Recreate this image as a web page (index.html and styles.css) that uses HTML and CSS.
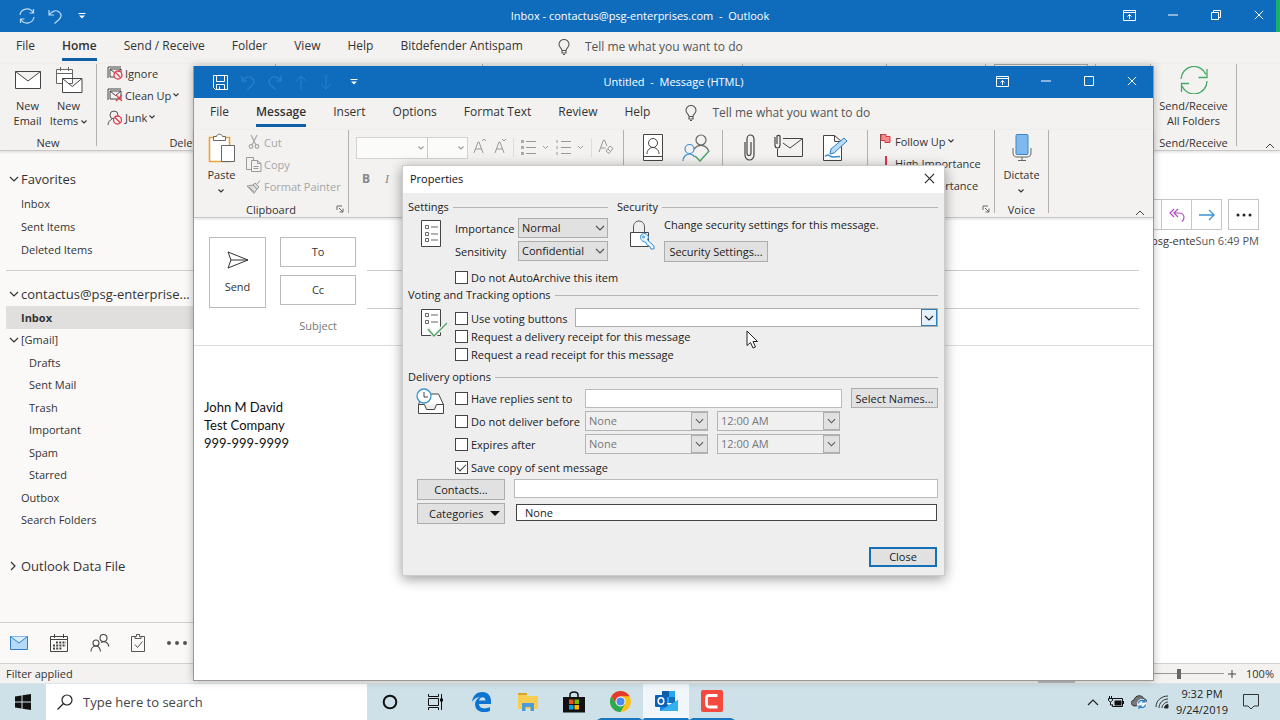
FILE: index.html
```html
<!DOCTYPE html>
<html lang="en">
<head>
<meta charset="utf-8">
<title>Inbox - contactus@psg-enterprises.com - Outlook</title>
<link rel="stylesheet" href="styles.css">
</head>
<body>
<svg class="defs" aria-hidden="true">
  <symbol id="chev" viewBox="0 0 10 6"><path d="M1 1l4 4 4-4" fill="none" stroke="currentColor" stroke-width="1.2"/></symbol>
  <symbol id="mini" viewBox="0 0 6 4"><path d="M.5 .5L3 3 5.5 .5" fill="none" stroke="currentColor" stroke-width="1.1"/></symbol>
  <symbol id="bulb" viewBox="0 0 12 16"><path d="M4 11.5C4 9 1 8.500 1 5.500a5 5 0 0 1 10 0C11 8.500 8 9 8 11.500zM4 11.500v2.500h4v-2.500M5 15.500h2" fill="none" stroke="#555" stroke-width="1.100"/></symbol>
  <symbol id="close" viewBox="0 0 12 12"><path d="M1 1l10 10M11 1L1 11" stroke="currentColor" stroke-width="1.200"/></symbol>
  <symbol id="ribbonopt" viewBox="0 0 13 11"><path d="M.5.5h12v10H.5zM.5 2.500h12M6.500 9V4.500M4.500 6.500l2-2 2 2" fill="none" stroke="currentColor"/></symbol>
  <symbol id="qat" viewBox="0 0 8 6"><path d="M.5.5h7" stroke="currentColor"/><path d="M1 2.500l3 3 3-3z" fill="currentColor"/></symbol>
  <symbol id="undo" viewBox="0 0 14 15"><path d="M1 1v5h5M1 6C4 2 8 .500 11 3s2.500 5 0 7.500L6.500 14.500" fill="none" stroke="currentColor" stroke-width="1.200"/></symbol>
  <symbol id="launch" viewBox="0 0 8 8"><path d="M1 5V1h5M3 3l4 4M7 3.500V7H3.500" fill="none" stroke="#666"/></symbol>
  <symbol id="envx" viewBox="0 0 16 13"><path d="M1 12V1h13M3 3h11v8H3zM3 3l5.500 4.500L14 3" fill="none" stroke="#444"/></symbol>
</svg>

<div class="desktop">
  <main class="outlook">
    <header class="titlebar main-title">
      <div class="quick">
        <svg width="16" height="16" viewBox="0 0 16 16" fill="none" stroke="#b9dcf7" stroke-width="1.200"><path d="M1 7a7 7 0 0 1 13-2.500M14.500 1v4h-4M15 9a7 7 0 0 1-13 2.500M1.500 15v-4h4"/></svg>
        <svg class="soft" width="14" height="15"><use href="#undo"/></svg>
        <svg width="8" height="6"><use href="#qat"/></svg>
      </div>
      <h1>Inbox - contactus@psg-enterprises.com&nbsp; -&nbsp; Outlook</h1>
      <div class="controls">
        <button aria-label="Ribbon display options"><svg width="13" height="11"><use href="#ribbonopt"/></svg></button>
        <button aria-label="Minimize"><svg width="10" height="2"><path d="M0 1h10" stroke="currentColor"/></svg></button>
        <button aria-label="Restore"><svg width="10" height="10" fill="none" stroke="currentColor"><path d="M.5 2.500h7v7h-7zM2.500 2.500v-2h7v7h-2"/></svg></button>
        <button aria-label="Close"><svg width="10" height="10"><use href="#close"/></svg></button>
      </div>
      <span class="edge"></span>
    </header>

    <nav class="tabs">
      <a href="#">File</a><a href="#" class="active">Home</a><a href="#">Send / Receive</a><a href="#">Folder</a><a href="#">View</a><a href="#">Help</a><a href="#">Bitdefender Antispam</a>
      <span class="tell"><svg width="12" height="16"><use href="#bulb"/></svg>Tell me what you want to do</span>
    </nav>

    <section class="ribbon main-ribbon">
      <div class="group g-new">
        <div class="tools">
          <button class="big"><svg width="28" height="28" viewBox="0 0 28 28"><path d="M1.500 5.500h25v17h-25zM1.500 5.500L14 15 26.500 5.500" fill="#fff" stroke="#444"/></svg><span>New<br>Email</span></button>
          <button class="big"><svg width="28" height="28" viewBox="0 0 28 28"><path d="M1.500 3.500h16v14h-16zM1.500 7.500h16M5.500 1v4M13.500 1v4" fill="#fff" stroke="#666"/><path d="M7.500 12.500h19.500v14H7.500zl9.800 8 9.700-8" fill="#fff" stroke="#444"/></svg><span>New<br>Items <svg width="6" height="4"><use href="#mini"/></svg></span></button>
        </div>
        <div class="label">New</div>
      </div>
      <div class="group g-delete">
        <div class="tools">
          <div class="small-stack">
            <button class="small"><svg width="16" height="14"><use href="#envx" width="16" height="13"/><circle cx="11" cy="9" r="4" fill="#f3f2f1" stroke="#e04050" stroke-width="1.300"/><path d="M8.300 6.300l5.400 5.400" stroke="#e04050" stroke-width="1.300"/></svg>Ignore</button>
            <button class="small"><svg width="16" height="14"><use href="#envx" width="16" height="13"/><path d="M9 7l6 6M15 7l-6 6" stroke="#e04050" stroke-width="1.300"/></svg>Clean Up <svg width="6" height="4"><use href="#mini"/></svg></button>
            <button class="small"><svg width="16" height="15" fill="none"><circle cx="7" cy="5" r="4" stroke="#555"/><path d="M1 15c0-3 2-5 4-6" stroke="#555"/><circle cx="10.500" cy="10" r="4" fill="#f3f2f1" stroke="#e04050" stroke-width="1.300"/><path d="M7.800 7.300l5.400 5.400" stroke="#e04050" stroke-width="1.300"/></svg>Junk <svg width="6" height="4"><use href="#mini"/></svg></button>
          </div>
        </div>
        <div class="label">Delete</div>
      </div>
      <div class="group g-a"></div><div class="group g-b"></div><div class="group g-c"></div><div class="group g-d"></div>
      <div class="group g-find"><div class="find-box"></div></div>
      <div class="group g-e"></div>
      <div class="group g-send">
        <div class="tools">
          <button class="big"><svg width="28" height="28" viewBox="0 0 28 28" fill="none" stroke="#45a864" stroke-width="1.300"><path d="M1 13A13 13 0 0 1 26 8.500M27 3v8.500h-8.500M27 15A13 13 0 0 1 2 20M1.500 26v-8.500H9"/></svg><span>Send/Receive<br>All Folders</span></button>
        </div>
        <div class="label">Send/Receive</div>
      </div>
      <div class="collapse"><svg width="10" height="6"><path d="M1 5l4-4 4 4" fill="none" stroke="#444"/></svg></div>
    </section>

    <div class="workspace">
      <aside class="sidebar">
        <h2><svg width="10" height="6"><use href="#chev"/></svg>Favorites</h2>
        <ul class="fav"><li>Inbox</li><li>Sent Items</li><li>Deleted Items</li></ul>
        <h2 class="account"><svg width="10" height="6"><use href="#chev"/></svg>contactus@psg-enterprise...</h2>
        <ul class="folders">
          <li class="selected">Inbox</li>
          <li class="parent"><svg width="10" height="6"><use href="#chev"/></svg>[Gmail]</li>
          <li class="child">Drafts</li><li class="child">Sent Mail</li><li class="child">Trash</li><li class="child">Important</li><li class="child">Spam</li><li class="child">Starred</li>
          <li>Outbox</li><li>Search Folders</li>
        </ul>
        <h2 class="datafile"><svg width="10" height="10"><path d="M2 1l4 4-4 4" fill="none" stroke="currentColor" stroke-width="1.200"/></svg>Outlook Data File</h2>
        <nav class="modules">
          <button aria-label="Mail"><svg width="18" height="14"><path d="M.5.5h17v13H.5z" fill="#b5daf8" stroke="#2f7fc4"/><path d="M.5.5L9 7 17.500.5" fill="#d9edfc" stroke="#2f7fc4"/></svg></button>
          <button aria-label="Calendar"><svg width="18" height="18" fill="none" stroke="#444"><path d="M.5 2.500h17v15H.5zM.5 5.500h17M4.500 0v4M13.500 0v4"/><path d="M6 8.500h10M3 11.500h13M3 14.500h9" stroke-width="1.800" stroke-dasharray="2 1.200"/></svg></button>
          <button aria-label="People"><svg width="20" height="18" fill="none" stroke="#444" stroke-width="1.100"><circle cx="13.500" cy="4" r="3.500"/><circle cx="6" cy="9" r="3"/><path d="M1 17.500c0-3 2-5.500 5-5.500s4 2 4.500 5.500M11 8.500c4-2 7 0 8 4"/></svg></button>
          <button aria-label="Tasks"><svg width="14" height="18" fill="none" stroke="#555"><path d="M4 2.500H.5v15h13v-15H10M4 4.500v-2h1.500v-2h3v2H10v2zM4 10.500l2.500 3 5-6"/></svg></button>
          <button aria-label="More"><svg width="20" height="4" fill="#555"><circle cx="2" cy="2" r="2"/><circle cx="10" cy="2" r="2"/><circle cx="18" cy="2" r="2"/></svg></button>
        </nav>
      </aside>
      <section class="reading">
        <div class="actions">
          <button aria-label="Reply"></button><button aria-label="Reply all"><svg width="16" height="14" fill="none" stroke="#b24fc0" stroke-width="1.200"><path d="M5 1L1 5l4 4M9 1L5 5l4 4M5 5h5c3 0 5 2 5 4.500 0 2-1 3-2 4"/></svg></button><button aria-label="Forward"><svg width="16" height="12" fill="none" stroke="#3a94d4" stroke-width="1.300"><path d="M0 6h15M10 1l5 5-5 5"/></svg></button>
          <button class="more" aria-label="More actions"><svg width="16" height="4" fill="#222"><circle cx="2" cy="2" r="1.500"/><circle cx="8" cy="2" r="1.500"/><circle cx="14" cy="2" r="1.500"/></svg></button>
        </div>
        <div class="meta"><span>psg-ente</span><time>Sun 6:49 PM</time></div>
      </section>
    </div>

    <footer class="status">
      <span>Filter applied</span>
      <label class="zoom"><input type="range" min="0" max="100" value="73" aria-label="Zoom"><svg width="8" height="8"><path d="M0 4h8M4 0v8" stroke="#444"/></svg><span>100%</span></label>
    </footer>
  </main>

  <section class="message">
    <header class="titlebar">
      <div class="quick">
        <svg width="15" height="15" fill="none" stroke="#fff"><path d="M.5.5h14v14H2.500l-2-2zM3.500.5v6h8v-6M3.500 14.500v-5h8v5M6.500 14.500v-3"/></svg>
        <svg class="dim" width="14" height="15"><use href="#undo"/></svg>
        <svg class="dim" width="14" height="15"><use href="#undo" transform="matrix(-1 0 0 1 14 0)"/></svg>
        <svg class="dim" width="12" height="15" fill="none" stroke="currentColor"><path d="M6 15V1M1 6l5-5 5 5"/></svg>
        <svg class="dim" width="12" height="15" fill="none" stroke="currentColor"><path d="M6 0v14M1 9l5 5 5-5"/></svg>
        <svg width="8" height="6"><use href="#qat"/></svg>
      </div>
      <h1>Untitled&nbsp; -&nbsp; Message (HTML)</h1>
      <div class="controls">
        <button aria-label="Ribbon display options"><svg width="13" height="11"><use href="#ribbonopt"/></svg></button>
        <button aria-label="Minimize"><svg width="10" height="2"><path d="M0 1h10" stroke="currentColor"/></svg></button>
        <button aria-label="Maximize"><svg width="10" height="10"><path d="M.5.5h9v9h-9z" fill="none" stroke="currentColor"/></svg></button>
        <button aria-label="Close"><svg width="10" height="10"><use href="#close"/></svg></button>
      </div>
    </header>
    <nav class="tabs">
      <a href="#">File</a><a href="#" class="active">Message</a><a href="#">Insert</a><a href="#">Options</a><a href="#">Format Text</a><a href="#">Review</a><a href="#">Help</a>
      <span class="tell"><svg width="12" height="16"><use href="#bulb"/></svg>Tell me what you want to do</span>
    </nav>
    <section class="ribbon">
      <div class="group m-clip">
        <div class="tools">
          <button class="big"><svg width="28" height="30" viewBox="0 0 28 30"><path d="M1.500 4.500h20v24h-20z" fill="#fff" stroke="#e8a33d" stroke-width="1.600"/><path d="M5.500 7.500v-4h3c0-3 6-3 6 0h3v4z" fill="#fff" stroke="#666"/><path d="M13.500 12.500h13v16h-13z" fill="#fff" stroke="#666"/></svg><span>Paste<br><svg width="6" height="4"><use href="#mini"/></svg></span></button>
          <div class="small-stack off">
            <button class="small"><svg width="16" height="14" fill="none" stroke="#a6a6a6" stroke-width="1.200"><path d="M5 0l5 10M11 0L6 10"/><circle cx="5" cy="11.500" r="1.800"/><circle cx="11" cy="11.500" r="1.800"/></svg>Cut</button>
            <button class="small"><svg width="16" height="15" fill="none" stroke="#999"><path d="M5.500 12.500h-5V.5h7v3M5.500 3.500h6l3.500 3v8H5.500zM11.500 3.500v3H15M7.500 9.500h5M7.500 11.500h5"/></svg>Copy</button>
            <button class="small"><svg width="16" height="15" fill="#ddd" stroke="#999"><path d="M1 7l6-1 4 4-3 4.500zM7 6l2-2 4 4-2 2M11 5l3-3.500M3 8l5 5"/></svg>Format Painter</button>
          </div>
        </div>
        <div class="label">Clipboard</div>
        <svg class="launcher" width="8" height="8"><use href="#launch"/></svg>
      </div>
      <div class="group m-text">
        <div class="font-row">
          <span class="font-pick font-name"><select aria-label="Font" disabled><option></option></select><svg width="6" height="4"><use href="#mini"/></svg></span><span class="font-pick font-size"><select aria-label="Font size" disabled><option></option></select><svg width="6" height="4"><use href="#mini"/></svg></span>
          <svg width="150" height="24" fill="none" stroke="#999"><path d="M6 16l4-11h1l4 11M7.500 12h6M14 4l2-2 2 2M27 16l4-11h1l4 11M28.500 12h6M34 2l2 2 2-2"/><path d="M45.500 1v19M123.500 1v19" stroke="#ddd"/><path d="M58 4.500h10M58 10.500h10M58 16.500h10M93 4.500h10M93 10.500h10M93 16.500h10"/><path d="M53 4.500h3M53 10.500h3M53 16.500h3" stroke-width="3" stroke="#aaa"/><path d="M89 3v3M89 9v3M89 15v3"/><path d="M75 9l2.500 2.500L80 9M110 9l2.500 2.500L115 9"/><path d="M131 15l4.500-12h1L139 9M133 11h4.500M138 14l4-5 3 2.500-4 5zM140 12l3 3"/></svg>
        </div>
        <div class="bi"><b>B</b><i>I</i></div>
      </div>
      <div class="group m-names"><div class="tools">
        <svg width="20" height="28" fill="#fff" stroke="#444"><path d="M.5.5h19v26H.5zM.5 22.500h19"/><circle cx="10" cy="9" r="4.500" fill="none"/><path d="M4 20c0-4 3-6.500 6-6.500s6 2.500 6 6.500" fill="none"/></svg>
        <svg width="28" height="28" fill="none" stroke="#666" stroke-width="1.200"><circle cx="19" cy="6" r="5"/><path d="M12 15c5-6 13-4 15 3"/><g stroke="#3c8fd4"><circle cx="7.500" cy="15" r="4.500"/><path d="M1 27c0-4 3-7 6.500-7 3 0 4 1 5 3"/></g><path d="M13 22l5 5 9-10" stroke="#4ea868" stroke-width="1.500"/></svg>
      </div></div>
      <div class="group m-include"><div class="tools">
        <svg width="12" height="28" fill="none" stroke="#444" stroke-width="1.200"><path d="M1 8V21a4.500 5 0 0 0 9 0V5a3.500 4 0 0 0-7 0v14a2 2.500 0 0 0 4 0V8"/></svg>
        <svg width="30" height="28" fill="none" stroke="#444"><path d="M3.500 15v7.500h25v-18H9M28 5L16 14 9 9"/><path d="M1 3v8a2.500 3 0 0 0 5 0V2a2 2 0 0 0-3 0v8" stroke-width="1.200"/></svg>
        <svg width="26" height="28" fill="#fff" stroke="#444"><path d="M1.500 1.500h11l7 6v19h-18zM12.500 1.500v6h7"/><path d="M3 22.500c3-3 4-1 6 0s5 0 9 0" fill="none" stroke="#3c8fd4" stroke-width="1.500"/><path d="M8 20l1-5L22 4l3 3-13 12z" fill="#b9dcf8" stroke="#2f7fc4"/></svg>
      </div></div>
      <div class="group m-tags"><div class="small-stack">
        <button class="small"><svg width="14" height="16"><path d="M1.500 1v15" stroke="#555"/><path d="M2 1.500h5v2h4v6H6v-2H2z" fill="#f38b8b" stroke="#d63a46"/></svg>Follow Up <svg width="6" height="4"><use href="#mini"/></svg></button>
        <button class="small"><svg width="14" height="14"><path d="M7 0v9" stroke="#dc3545" stroke-width="2"/><circle cx="7" cy="12.500" r="1.300" fill="#dc3545"/></svg>High Importance</button>
        <button class="small"><svg width="14" height="14"><path d="M7 0v12M3 8l4 4 4-4" fill="none" stroke="#3c8fd4" stroke-width="1.500"/></svg>Low Importance</button>
      </div>
      <svg class="launcher" width="8" height="8"><use href="#launch"/></svg></div>
      <div class="group m-voice"><div class="tools">
        <button class="big"><svg width="20" height="30"><rect x="4" y="1.500" width="12" height="20" rx="1" fill="#7db9ed" stroke="#3c84c4"/><path d="M1 15v5c0 3 2 4 4 4h10c2 0 4-1 4-4v-5M10 24v3M6 27.500h8" fill="none" stroke="#666"/></svg><span>Dictate<br><svg width="6" height="4"><use href="#mini"/></svg></span></button></div>
        <div class="label">Voice</div>
      </div>
      <div class="collapse"><svg width="10" height="6"><path d="M1 5l4-4 4 4" fill="none" stroke="#444"/></svg></div>
    </section>
    <form class="compose">
      <div class="head">
        <button type="button" class="send"><svg width="22" height="18" fill="none" stroke="#333"><path d="M1 1l20 8L1 17l3-8zM4 9h17"/></svg>Send</button>
        <div class="fields">
          <button type="button" class="addr">To</button><input aria-label="To">
          <button type="button" class="addr">Cc</button><input aria-label="Cc">
          <label for="subject">Subject</label><input id="subject" class="subject">
        </div>
      </div>
      <div class="letter">John M David<br>Test Company<br>999-999-9999</div>
    </form>
  </section>

  <section class="dialog" role="dialog" aria-labelledby="dlg-title">
    <header><h2 id="dlg-title">Properties</h2><button class="x" aria-label="Close dialog"><svg width="11" height="11"><use href="#close"/></svg></button></header>
    <form>
      <div class="two">
        <section class="settings">
          <h3>Settings</h3>
          <div class="with-icon">
            <svg width="22" height="28" fill="#fff" stroke="#444"><path d="M1.500.5h19v26h-19z"/><path d="M5.500 5.500h3v3h-3zM5.500 12.500h3v3h-3zM5.500 18.500h3v3h-3zM11 7h7M11 14h7M11 20h7" stroke="#666"/></svg>
            <div class="settings-grid">
              <label for="imp">Importance</label><span class="pick"><select id="imp"><option>Normal</option></select><svg width="10" height="6"><use href="#chev"/></svg></span>
              <label for="sens">Sensitivity</label><span class="pick"><select id="sens"><option>Confidential</option></select><svg width="10" height="6"><use href="#chev"/></svg></span>
              <label class="check archive"><input type="checkbox">Do not AutoArchive this item</label>
            </div>
          </div>
        </section>
        <section class="security">
          <h3>Security</h3>
          <div class="with-icon">
            <svg width="26" height="30" fill="none" stroke="#555"><path d="M1.500 12.500h18v14h-18z" fill="#fff" stroke="#444"/><path d="M4.500 12V7c0-8 11-8 11 0v5"/><path d="M12 15a4 4 0 1 1 6.500 5l6.500 6v3h-3l-1.500-3-2-.500-2-3.500c-4 0-6-4-4.500-7z" fill="#e8f4fd" stroke="#2f8fd4"/><circle cx="14.500" cy="17" r="1" stroke="#2f8fd4"/></svg>
            <div class="sec-body"><span>Change security settings for this message.</span><button type="button" class="btn">Security Settings...</button></div>
          </div>
        </section>
      </div>
      <section class="voting">
        <h3>Voting and Tracking options</h3>
        <div class="with-icon">
          <svg width="28" height="30" fill="none" stroke="#444"><path d="M1.500.5h19v26h-19z" fill="#fff"/><path d="M5.500 4.500h3v3h-3zM5.500 11.500h3v3h-3zM11 6h7M11 13h7" stroke="#666"/><path d="M8 20l6 7L27 14" stroke="#eee" stroke-width="4"/><path d="M8 20l6 7L27 14" stroke="#52a667" stroke-width="1.300"/></svg>
          <div class="lines">
            <div class="line"><label class="check"><input type="checkbox">Use voting buttons</label><span class="combo"><input aria-label="Voting buttons"><button type="button" aria-label="Show choices"><svg width="10" height="6"><use href="#chev"/></svg></button></span></div>
            <label class="check"><input type="checkbox">Request a delivery receipt for this message</label>
            <label class="check"><input type="checkbox">Request a read receipt for this message</label>
          </div>
        </div>
      </section>
      <section class="delivery">
        <h3>Delivery options</h3>
        <div class="with-icon">
          <svg width="28" height="28" fill="#fff" stroke="#444"><path d="M1.500 16.500L6 6h15.500l5 10.500v9h-25zM1.500 16.500h6l2 5h8l2-5h7"/><circle cx="7" cy="8" r="7" stroke="#3c94cf" stroke-width="1.300"/><path d="M7 4v5h4" fill="none"/></svg>
          <div class="delivery-grid">
            <label class="check"><input type="checkbox">Have replies sent to</label><input class="field reply" aria-label="Reply address"><button type="button" class="btn">Select Names...</button>
            <label class="check"><input type="checkbox">Do not deliver before</label><span class="pick date"><select disabled aria-label="Deliver date"><option>None</option></select><svg width="10" height="6"><use href="#chev"/></svg></span><span class="pick date"><select disabled aria-label="Deliver time"><option>12:00 AM</option></select><svg width="10" height="6"><use href="#chev"/></svg></span>
            <label class="check"><input type="checkbox">Expires after</label><span class="pick date"><select disabled aria-label="Expiry date"><option>None</option></select><svg width="10" height="6"><use href="#chev"/></svg></span><span class="pick date"><select disabled aria-label="Expiry time"><option>12:00 AM</option></select><svg width="10" height="6"><use href="#chev"/></svg></span>
            <label class="check save"><input type="checkbox" checked>Save copy of sent message</label>
          </div>
        </div>
        <div class="bottom">
          <button type="button" class="btn">Contacts...</button><input class="field" aria-label="Contacts">
          <button type="button" class="btn cat"><span>Cate<u>g</u>ories</span><svg width="10" height="5"><path d="M0 0h10L5 5z" fill="#111"/></svg></button><input class="field dark" aria-label="Categories" value="None">
        </div>
      </section>
      <footer><button type="button" class="btn primary">Close</button></footer>
    </form>
  </section>

  <span class="scroll-hint"></span>
  <svg class="cursor" width="12" height="19"><path d="M1 1v14.500l3.500-3 2.500 5.500 2.500-1-2.500-5.500h4.500z" fill="#fff" stroke="#222"/></svg>
</div>

<footer class="taskbar">
  <button class="cell" aria-label="Start"><svg width="16" height="16" fill="#111"><path d="M0 2.500L6.500 1.500v6H0zM7.500 1.300L16 0v7.500H7.500zM0 8.500h6.500v6L0 13.500zM7.500 8.500H16V16l-8.500-1.300z"/></svg></button>
  <label class="search"><svg width="16" height="16" fill="none" stroke="#222" stroke-width="1.200"><circle cx="10" cy="6" r="5"/><path d="M6.500 9.500L.5 15.500"/></svg><input placeholder="Type here to search"></label>
  <button class="cell" aria-label="Cortana"><svg width="16" height="16"><circle cx="8" cy="8" r="6.300" fill="none" stroke="#111" stroke-width="2"/></svg></button>
  <button class="cell" aria-label="Task view"><svg width="16" height="16" fill="none" stroke="#111"><path d="M.5 4.500h10v7H.5zM.5 0v2.500h10V0M.5 16v-2.500h10V16M13.500 0v16"/><path d="M13.500 4.500v3" stroke-width="3"/></svg></button>
  <button class="cell" aria-label="Edge"><svg width="20" height="20"><path d="M0 10C1 3 5 0 10.500 0 16 0 19 4 19 9v3H7c0 4 5 6 11 3v4c-7 3-15 .500-15-7 0-3 2-5.500 5-7C4 5.500 2 7 0 10zM7 8.500h6.500C13.500 4 8 4 7 8.500z" fill="#0c74d1"/></svg></button>
  <button class="cell" aria-label="File Explorer"><svg width="20" height="18"><path d="M0 0h9v3h11v13H0z" fill="#f8cf54"/><path d="M0 0h9v2H0z" fill="#d9a52d"/><path d="M4 18v-8h12v8h-3.500v-4h-5v4z" fill="#4a9bd9"/></svg></button>
  <button class="cell" aria-label="Store"><svg width="22" height="22"><path d="M7 7V4c0-4 8-4 8 0v3" fill="none" stroke="#111" stroke-width="1.500"/><path d="M0 6h22v15.500H0z" fill="#111"/><path d="M6 8.500h4.500V13H6z" fill="#f25022"/><path d="M11.500 8.500H16V13h-4.500z" fill="#7fba00"/><path d="M6 14h4.500v4.500H6z" fill="#00a4ef"/><path d="M11.500 14H16v4.500h-4.500z" fill="#ffb900"/></svg></button>
  <button class="cell run" aria-label="Chrome"><svg width="21" height="21"><circle cx="10.500" cy="10.500" r="10.500" fill="#fbc116"/><path d="M1.400 5.250A10.500 10.500 0 0 1 19.600 5.250H10.500L6 13z" fill="#e33b2e"/><path d="M1.400 5.250A10.500 10.500 0 0 0 10.500 21L15 13H6z" fill="#2da94f"/><circle cx="10.500" cy="10.500" r="5" fill="#fff"/><circle cx="10.500" cy="10.500" r="4" fill="#4a8af4"/></svg></button>
  <button class="cell run open" aria-label="Outlook"><svg width="23" height="20"><path d="M7 0h13v12H7z" fill="#28a8ea"/><path d="M7 0h7v6H7z" fill="#0f5ca8"/><path d="M14 6h6v6h-6z" fill="#1470bd"/><path d="M5 9l9 5 9-5v11H5z" fill="#1a86d9"/><path d="M5 20L23 9v11z" fill="#35b0f0"/><rect y="4" width="12" height="12" rx="1" fill="#0c62ba"/><ellipse cx="6" cy="10" rx="2.800" ry="3.300" fill="none" stroke="#fff" stroke-width="1.500"/></svg></button>
  <button class="cell run" aria-label="Camtasia"><svg width="22" height="22"><rect width="22" height="22" rx="2" fill="#f3493e"/><path d="M16.500 5.500H8c-1.500 0-2.500 1-2.500 2.500v6C5.500 15.500 6.500 17 8 17h8.500" fill="none" stroke="#fff" stroke-width="2.800"/></svg></button>
  <div class="tray">
    <button aria-label="Hidden icons"><svg width="12" height="8"><path d="M1 7l5-5 5 5" fill="none" stroke="#222" stroke-width="1.200"/></svg></button>
    <button aria-label="Battery"><svg width="16" height="12"><path d="M6.500 4.500h7v5h-7z" fill="#111"/><path d="M4.500 2.500h10v8h-10v-2M15.500 5v3M.5 2.500h4v2l-2 1.500-2-1.500zM1.500 0v2M3.500 0v2M2.500 6v3h2" fill="none" stroke="#111"/></svg></button>
    <button aria-label="OneDrive"><svg width="16" height="14"><path d="M3 11C-1 10 0 5 3 5c1-5 8-6 10-1 3 0 4 3 2 6z" fill="#777" stroke="#333"/><circle cx="11" cy="9" r="5" fill="#eef6fb"/><path d="M7.500 8.500c0-3 4-4 6-2M14 4v3h-3M14.500 9.500c0 3-4 4-6 2M8 14v-3h3" fill="none" stroke="#2277bb" stroke-width="1.200"/></svg></button>
    <button aria-label="Network"><svg width="14" height="14" fill="none" stroke="#333"><path d="M1 12C1 6 6 1 13 1M4 13c0-5 4-9 9-9M7 13c0-3 3-6 6-6"/><path d="M9.500 13c0-2 1.500-3.500 3.500-3.500V13z" fill="#222"/></svg></button>
    <time>9:32 PM<br>9/24/2019</time>
    <button class="note" aria-label="Notifications"><svg width="16" height="16"><path d="M.5.5h15v11.500h-4.500L8 15l-3-3H.5z" fill="none" stroke="#333"/></svg></button>
  </div>
</footer>
</body>
</html>
```
FILE: styles.css
```css
* { box-sizing: border-box; }
body {
  margin: 0;
  height: 100vh;
  display: flex;
  flex-direction: column;
  overflow: hidden;
  font-family: "Open Sans", "Noto Sans", sans-serif;
  font-size: 11px;
  color: #333;
}
button, input, select { font: inherit; color: inherit; margin: 0; }
button { background: none; border: 0; padding: 0; }
h1, h2, h3, ul { margin: 0; padding: 0; font-weight: 400; list-style: none; }
a { color: inherit; text-decoration: none; }
svg { flex: none; }
.defs { position: absolute; width: 0; height: 0; }

.desktop { flex: 1; position: relative; min-height: 0; }
.outlook { height: 100%; display: flex; flex-direction: column; background: #fff; }

/* Title bars */
.titlebar {
  display: grid;
  grid-template-columns: 1fr auto 1fr;
  align-items: center;
  height: 32px;
  padding-bottom: 2px;
  background: #0f6cbd;
  color: #fff;
}
.main-title { position: relative; }
.titlebar h1 { font-size: 11px; white-space: nowrap; }
.quick { display: flex; align-items: center; gap: 13px; padding: 2px 0 0 19px; }
.main-title .quick svg:last-child { margin-left: 3px; }
.dim { color: #2a80cb; }
.soft { color: #b9dcf7; }
.controls { display: flex; justify-content: flex-end; }
.controls button { width: 43px; height: 30px; display: grid; place-items: center; }
.edge { position: absolute; top: 0; right: 0; width: 4px; height: 32px; background: #17b169; }

/* Tabs */
.tabs {
  display: flex;
  align-items: center;
  gap: 27px;
  height: 32px;
  padding: 0 16px;
  background: #f3f2f1;
  font-size: 12px;
  white-space: nowrap;
}
.tabs a { line-height: 20px; padding-bottom: 2px; border-bottom: 3px solid transparent; }
.tabs .active { font-weight: 600; border-color: #0f5fa8; }
.tell { display: flex; align-items: center; gap: 15px; color: #555; padding: 0 0 3px 8px; }

/* Ribbons */
.ribbon { display: flex; height: 87px; background: #f3f2f1; border-bottom: 1px solid #c8c6c4; box-shadow: 0 1px 3px #0002; position: relative; z-index: 1; }
.group { position: relative; flex: none; display: flex; flex-direction: column; margin-bottom: 4px; border-right: 1px solid #b3b1af; }
.tools { display: flex; flex: 1; }
.label { text-align: center; line-height: 14px; margin-bottom: -4px; }
.main-ribbon .label { line-height: 15px; }
.big { display: flex; flex-direction: column; align-items: center; gap: 4px; width: 41px; line-height: 15px; white-space: nowrap; }
.big span svg { vertical-align: middle; }
.small-stack { display: flex; flex-direction: column; align-items: flex-start; }
.small { display: flex; align-items: center; gap: 2px; height: 22px; white-space: nowrap; }
.g-new { width: 97px; }
.g-new .tools { padding: 2px 0 0 7px; }
.g-delete { width: 179px; }
.g-delete .tools { padding-left: 10px; }
.g-delete .small-stack { margin-top: -2px; }
.g-a { width: 207px; } .g-b { width: 260px; } .g-c { width: 144px; } .g-d { width: 99px; } .g-find { width: 110px; } .g-e { width: 55px; } .g-send { width: 86px; }
.g-send .tools { justify-content: center; padding-top: 2px; }
.find-box { height: 20px; margin: 0 7px 0 8px; border: 1px solid #aaa; background: #fff; }
.collapse { margin-left: auto; padding: 0 8px 0 0; align-self: flex-end; line-height: 10px; }
.main-ribbon .collapse { padding-right: 5px; }

/* Workspace */
.workspace { flex: 1; display: flex; justify-content: space-between; min-height: 0; }
.sidebar { width: 194px; display: flex; flex-direction: column; background: #faf9f8; white-space: nowrap; overflow: hidden; color: #333; }
.sidebar h2 { display: flex; align-items: center; gap: 2px; height: 24px; margin: 16px 0 1px; padding-left: 9px; font-size: 13px; }
.fav { margin-left: 6px; padding: 0 0 9px 15px; border-bottom: 1px solid #d2d0ce; }
.fav li { height: 23px; line-height: 23px; }
.sidebar .account { margin: 11px 0 0; }
.folders { height: 225px; margin-left: 6px; display: flex; flex-direction: column; }
.folders li { flex: 1; display: flex; align-items: center; padding-left: 15px; }
.folders .selected { background: #e1dfdd; font-weight: 700; }
.folders .parent { padding-left: 3px; gap: 2px; }
.folders .child { padding-left: 23px; }
.sidebar .datafile { margin: 23px 0 0; }
.modules { margin-top: auto; height: 41px; display: flex; align-items: center; justify-content: space-between; padding: 0 7px 0 10px; border-top: 1px solid #d2d0ce; }
.modules button { display: grid; place-items: center; }
.reading { width: 160px; padding: 48px 21px 0 0; }
.actions { display: flex; justify-content: flex-end; }
.actions button { width: 31px; height: 31px; margin-left: -1px; border: 1px solid #c8c6c4; display: grid; place-items: center; }
.actions .more { margin-left: 6px; }
.meta { display: flex; justify-content: flex-end; line-height: 16px; margin-top: 3px; white-space: nowrap; }
.meta time { color: #555; }
.status { display: flex; justify-content: space-between; align-items: center; height: 20px; padding: 0 6px; background: #f3f2f1; border-top: 1px solid #d2d0ce; }
.zoom { display: flex; align-items: center; gap: 4px; }
.zoom span { margin-left: 6px; }
.zoom input { appearance: none; width: 165px; height: 10px; background: linear-gradient(#999, #999) center / 100% 1px no-repeat; }
.zoom input::-webkit-slider-thumb { appearance: none; width: 4px; height: 10px; background: #666; }

/* Message window */
.message { position: absolute; top: 66px; left: 193px; right: 126px; bottom: 2px; display: flex; flex-direction: column; border: 1px solid #999; border-top: 0; background: #fff; box-shadow: 0 0 8px #0004; z-index: 2; }
.message .quick { gap: 13px; }
.message .quick svg:last-child { margin-left: 5px; }
.message .ribbon { height: 88px; }
.m-clip { width: 155px; } .m-text { width: 275px; } .m-names { width: 99px; } .m-include { width: 145px; } .m-tags { width: 127px; } .m-voice { width: 54px; }
.m-clip .tools { padding: 3px 0 0 7px; gap: 4px; }
.m-clip .small-stack { margin-top: -2px; }
.off { color: #a6a6a6; }
.launcher { position: absolute; right: 4px; bottom: 0; }
.font-row { display: flex; padding: 7px 0 0 7px; }
.font-pick { position: relative; flex: none; color: #999; }
.font-pick select { appearance: none; display: block; width: 100%; height: 22px; border: 1px solid #c8c6c4; background: #fff; border-radius: 0; padding: 0; }
.font-pick svg { position: absolute; right: 4px; top: 9px; }
.font-name { width: 72px; }
.font-size { width: 41px; margin-left: -1px; }
.bi { display: flex; gap: 15px; padding: 10px 13px; font-size: 12px; color: #888; line-height: 16px; }
.bi i { font-family: "Liberation Serif", serif; }
.m-names .tools { gap: 19px; padding: 4px 0 0 19px; }
.m-include .tools { gap: 18px; padding: 4px 0 0 21px; }
.m-tags { padding-left: 11px; }
.m-voice .tools { justify-content: center; padding-top: 3px; }
.compose { flex: 1; }
.head { display: flex; gap: 14px; padding: 19px 14px 0 15px; }
.send { width: 57px; height: 71px; display: flex; flex-direction: column; align-items: center; justify-content: center; gap: 10px; border: 1px solid #bbb; }
.fields { flex: 1; display: grid; grid-template-columns: 76px 1fr; grid-template-rows: 30px 30px 28px; gap: 8px 11px; }
.addr { border: 1px solid #bbb; padding-bottom: 2px; }
.fields input { border: 0; border-bottom: 1px solid #ccc; outline: 0; min-width: 0; margin-bottom: -4px; background: none; }
.fields label { text-align: center; color: #777; line-height: 26px; }
.fields .subject { border: 0; }
.letter { border-top: 1px solid #ddd; padding: 52px 10px 0; margin-top: 4px; color: #111; font: 13px/18px Lato, sans-serif; }

/* Properties dialog */
.dialog { position: absolute; top: 165px; left: 402px; width: 543px; background: #eee; border: 1px solid #ccc; box-shadow: 0 3px 12px #0006; color: #222; z-index: 3; }
.dialog header { display: flex; align-items: center; justify-content: space-between; height: 27px; padding: 0 9px 2px 7px; background: #fff; }
.dialog h2 { font-size: 11px; color: #111; }
.x { width: 11px; height: 11px; display: grid; }
.dialog form { padding: 6px 6px 8px 5px; }
.two { display: grid; grid-template-columns: 200px 1fr; gap: 9px; }
.dialog h3 { display: flex; align-items: center; gap: 4px; font-size: 11px; line-height: 16px; }
.dialog h3::after { content: ""; flex: 1; height: 1px; background: #b5b5b5; }
.with-icon { display: flex; gap: 6px; padding-left: 12px; }
.with-icon > svg { width: 28px; overflow: visible; }
.with-icon > svg + div { flex: 1; min-width: 0; margin-left: 1px; }
.settings .with-icon, .security .with-icon { padding-top: 3px; }
.two .with-icon > svg { margin-top: 2px; }
.settings-grid { display: grid; grid-template-columns: 63px 90px; grid-template-rows: 20px 20px 20px; row-gap: 3px; align-items: center; }
.archive { grid-column: 1 / 3; padding-top: 7px; }
.pick { position: relative; display: block; }
.pick select { appearance: none; display: block; width: 100%; height: 20px; padding: 0 3px 1px; background: #e1e1e1; border: 1px solid #adadad; border-radius: 0; }
.pick svg { position: absolute; right: 3px; top: 7px; color: #555; pointer-events: none; }
.check { display: flex; align-items: center; gap: 3px; height: 18px; white-space: nowrap; }
.check input { appearance: none; flex: none; width: 13px; height: 13px; border: 1px solid #444; background: #fff; }
.check input:checked::after { content: ""; display: block; width: 8px; height: 4px; margin: 2px 1px; border: solid #333; border-width: 0 0 1px 1px; transform: rotate(-45deg); }
.btn { height: 21px; border: 1px solid #adadad; background: #e1e1e1; white-space: nowrap; }
.sec-body { display: flex; flex-direction: column; align-items: flex-start; gap: 9px; white-space: nowrap; line-height: 14px; }
.sec-body .btn { width: 104px; }
.voting { margin-top: 3px; }
.voting .with-icon { padding-top: 6px; }
.line { display: flex; justify-content: space-between; height: 18px; }
.combo { width: 363px; height: 19px; display: flex; margin-top: -1px; border: 1px solid #adadad; background: #fff; }
.combo input { flex: 1; min-width: 0; border: 0; outline: 0; background: none; }
.combo button { width: 16px; height: 17px; border: 1px solid #2f7fb8; background: #e5f1fb; display: grid; place-items: center; }
.delivery { margin-top: 6px; }
.delivery .with-icon { padding-left: 9px; padding-top: 3px; }
.delivery .with-icon > svg { width: 31px; }
.delivery-grid { display: grid; grid-template-columns: 130px 123px 124px 1fr; grid-template-rows: 20px 20px 20px 20px; gap: 3px 0; align-items: center; }
.delivery-grid .btn { grid-column: 4; justify-self: end; width: 87px; height: 20px; }
.delivery-grid .reply { grid-column: 2 / 4; width: 257px; }
.field { height: 19px; border: 1px solid #bbb; background: #fff; padding: 0 8px; min-width: 0; }
.delivery-grid .check { grid-column: 1; }
.date { width: 123px; }
.date + .date { margin-left: 9px; }
.date select:disabled { background: #f0f0f0; border-color: #b5b5b5; color: #777; opacity: 1; }
.date svg { right: 0; top: 1px; width: 17px; height: 18px; padding: 5px 3px; border: 1px solid #adadad; background: #e1e1e1; }
.delivery-grid .save { grid-column: 1 / 5; }
.bottom { display: grid; grid-template-columns: 88px 1fr; gap: 3px 9px; margin: 2px 0 0 9px; }
.cat { display: flex; align-items: center; justify-content: space-between; padding: 0 4px 0 11px; }
.dark { border-color: #444; height: 17px; margin: 1px 1px 0 2px; }
.dialog footer { display: flex; justify-content: flex-end; margin: 23px 1px 0 0; }
.dialog .primary { width: 68px; height: 20px; border: 2px solid #1670b8; line-height: 14px; }

.scroll-hint { position: absolute; right: 205px; bottom: 0; width: 37px; height: 2px; background: #bbb; }
.cursor { position: absolute; left: 746px; top: 330px; z-index: 4; }

/* Taskbar */
.taskbar { display: flex; height: 37px; background: #cfe1e8; border-top: 1px solid #dbe6ea; color: #222; }
.cell { flex: none; width: 46px; display: grid; place-items: center; }
.search { width: 321px; display: flex; align-items: center; gap: 8px; padding: 0 11px; background: #fff; }
.search input { flex: 1; border: 0; outline: 0; font-size: 13px; background: none; }
.search input::placeholder { color: #444; opacity: 1; }
.run { border-bottom: 2px solid #1976c0; border-left: 4px solid transparent; border-right: 4px solid transparent; background-clip: padding-box; }
.run.open { background: #f0f6fa; border-left-width: 1px; border-right-width: 1px; background-clip: border-box; }
.tray { margin-left: auto; display: flex; align-items: center; padding-right: 9px; }
.tray button { width: 23px; display: grid; place-items: center; }
.tray time { width: 58px; text-align: center; line-height: 16px; }
.tray .note { width: 40px; }
```
